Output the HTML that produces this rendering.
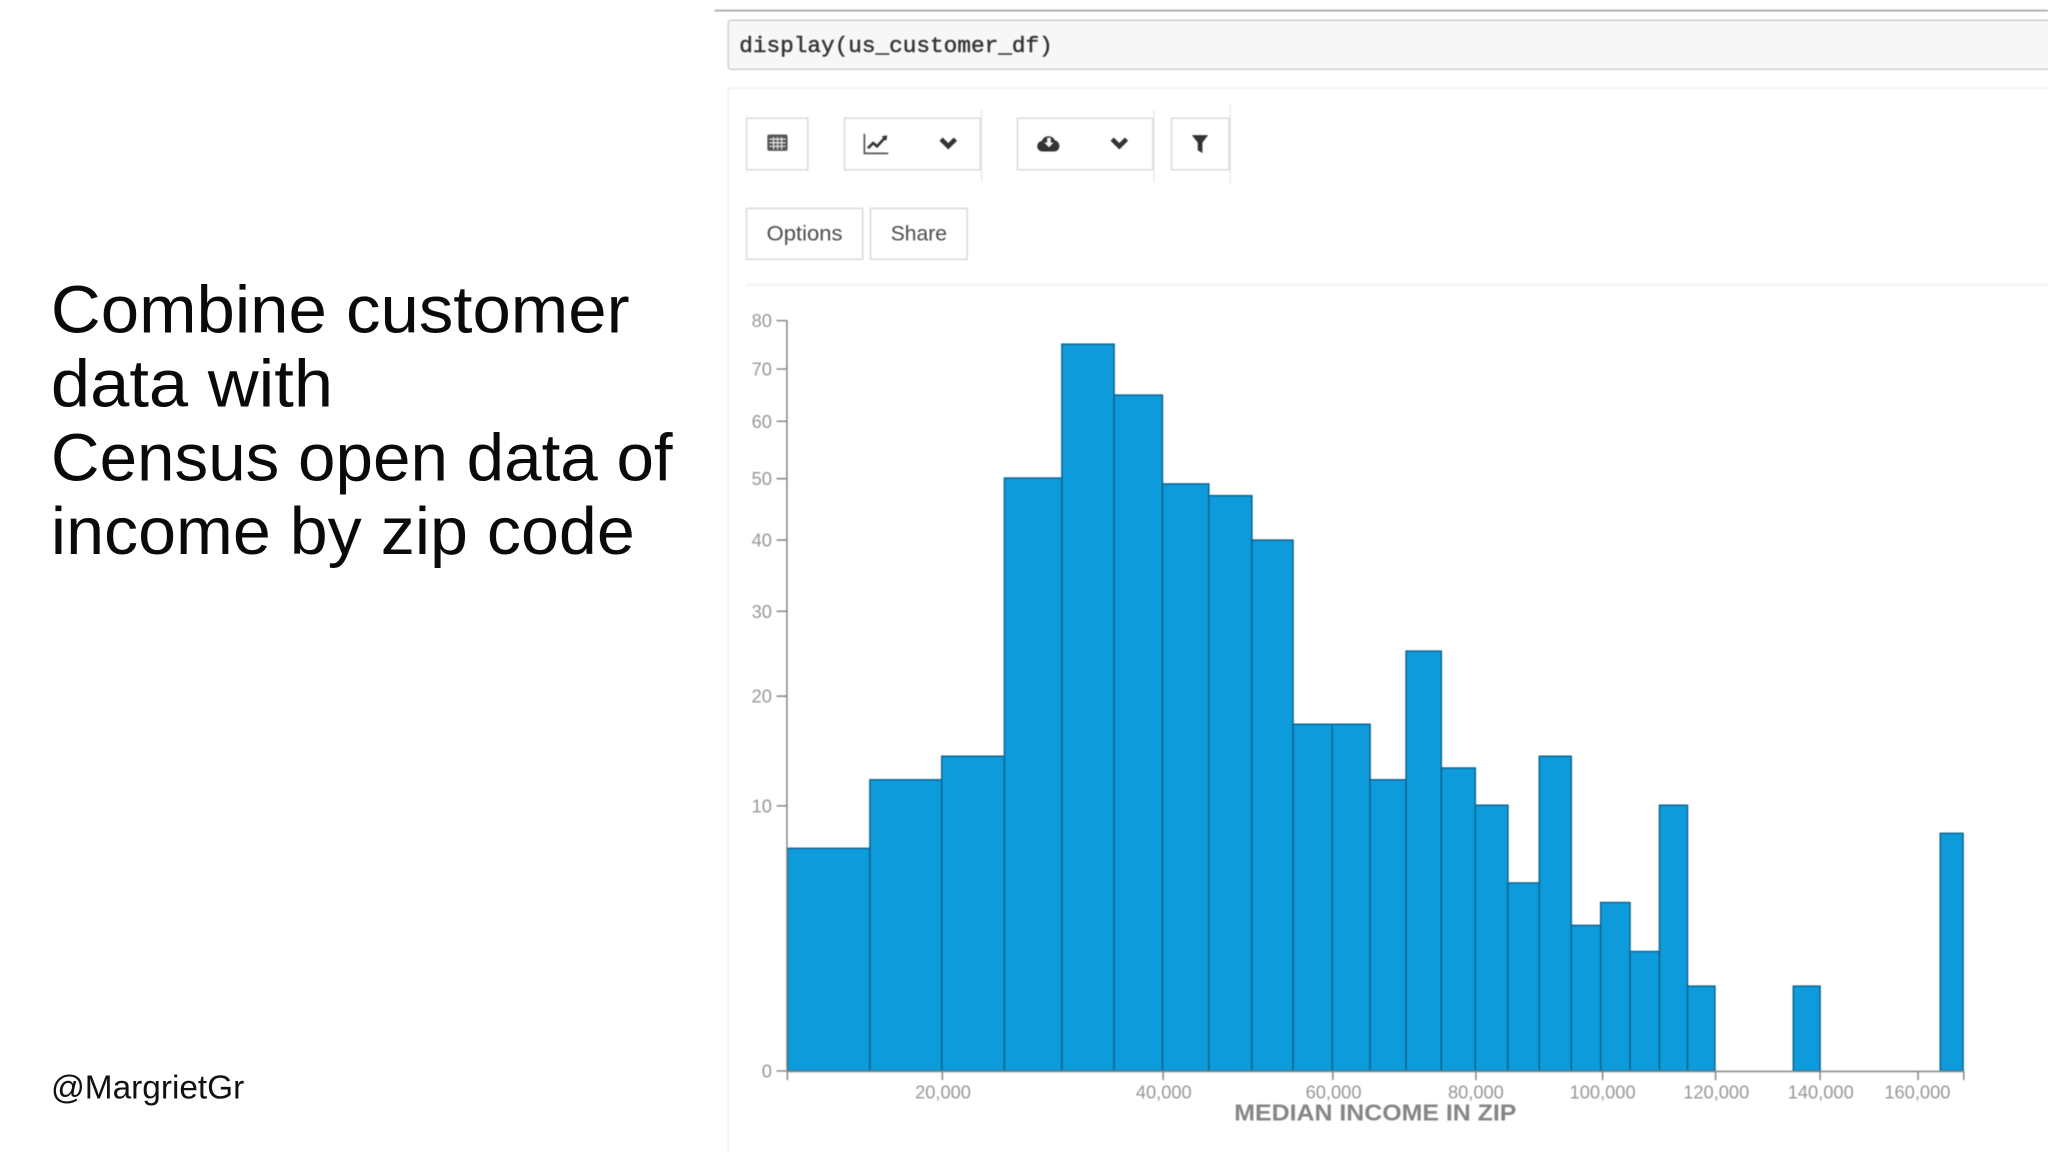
<!DOCTYPE html>
<html lang="en">
<head>
<meta charset="utf-8">
<title>Combine customer data with Census open data</title>
<style>
html,body{margin:0;padding:0;background:#fff;width:2048px;height:1152px;overflow:hidden}
svg{display:block;position:absolute;left:0;top:0}
.h{font-family:"Liberation Sans",sans-serif;font-size:51px;fill:#0a0a0a}
.ax{font-family:"Liberation Sans",sans-serif;font-size:14px;fill:#979797;text-anchor:middle}
.ay{font-family:"Liberation Sans",sans-serif;font-size:14px;fill:#979797;text-anchor:end}
.bar{fill:#0d9bdc;stroke:#0c628c;stroke-width:1.1}
.btn{fill:#fff;stroke:#d8d8d8;stroke-width:1.1}
</style>
</head>
<body>
<svg width="2048" height="1152" viewBox="0 0 1568 882" xmlns="http://www.w3.org/2000/svg">
<rect width="1568" height="882" fill="#fff"/>

<text class="h" x="39" y="254.7" textLength="443" lengthAdjust="spacingAndGlyphs">Combine customer</text>
<text class="h" x="39" y="311.3" textLength="216" lengthAdjust="spacingAndGlyphs">data with</text>
<text class="h" x="39" y="367.7" textLength="476" lengthAdjust="spacingAndGlyphs">Census open data of</text>
<text class="h" x="39" y="424.3" textLength="447" lengthAdjust="spacingAndGlyphs">income by zip code</text>
<text x="39" y="841" font-family="'Liberation Sans',sans-serif" font-size="25.500" fill="#111" textLength="148" lengthAdjust="spacingAndGlyphs">@MargrietGr</text>

<g style="filter:blur(.35px)">
<!-- notebook chrome -->
<rect x="547" y="7.4" width="1021" height="1.4" fill="#aaa"/>
<rect x="557.5" y="15.5" width="1020" height="37.5" rx="2" fill="#f7f7f7" stroke="#cfcfcf" stroke-width="1.1"/>
<text x="566" y="40" font-family="'Liberation Mono',monospace" font-size="17.2" fill="#333" stroke="#333" stroke-width=".35" textLength="240" lengthAdjust="spacingAndGlyphs">display(us_customer_df)</text>
<rect x="557.5" y="67.5" width="1020" height="830" rx="2" fill="#fff" stroke="#f0f0f0" stroke-width="1.2"/>

<!-- toolbar -->
<rect class="btn" x="571.5" y="90.5" width="47" height="39.5"/>
<rect class="btn" x="646.5" y="90.5" width="104" height="39.5"/>
<rect class="btn" x="779" y="90.5" width="103.5" height="39.5"/>
<rect class="btn" x="897" y="90.5" width="44" height="39.5"/>
<path d="M751.5 84V139M883.5 84V139M942 80V141" stroke="#e6e6e6" stroke-width="1" fill="none"/>

<!-- table icon -->
<rect x="587.5" y="103" width="15.5" height="12.5" rx="1.5" fill="#555"/>
<path d="M589 106.5h12.5M589 109.3h12.5M589 112h12.5M592.3 105v9.5M595.3 105v9.5M598.4 105v9.5" stroke="#e8e8e8" stroke-width=".9" fill="none"/>
<!-- chart icon -->
<path d="M661.8 102.5V117.4H680" stroke="#555" stroke-width="1.3" fill="none"/>
<path d="M664.5 113.5L668.5 109.5L671.5 112L677.5 105.5" stroke="#333" stroke-width="2" fill="none"/>
<path d="M675 104.3L679.3 103.6L678.6 108Z" fill="#333"/>
<!-- chevrons -->
<path d="M720.5 106.5L726 112L731.5 106.500" stroke="#333" stroke-width="3.500" fill="none"/>
<path d="M851.5 106.5L857 112L862.5 106.500" stroke="#333" stroke-width="3.500" fill="none"/>
<!-- cloud download -->
<path d="M798.500 116a4 4 0 0 1-4.300-4.800a3.600 3.600 0 0 1 3.400-3.200a5.400 5.400 0 0 1 10-.6a4.400 4.400 0 0 1 3.500 4.500a4 4 0 0 1-3.800 4.100Z" fill="#333"/>
<path d="M801.700 105.500h2.800v3.600h2.200l-3.600 3.700l-3.600-3.700h2.200Z" fill="#f4f4f4"/>
<!-- filter -->
<path d="M912.500 103.500H925L920.600 109.200V117.200L917 115V109.200Z" fill="#333"/>

<!-- option buttons -->
<rect class="btn" x="571.5" y="159.5" width="89" height="39"/>
<rect class="btn" x="666.5" y="159.5" width="74" height="39"/>
<text x="587" y="184" font-family="'Liberation Sans',sans-serif" font-size="16.500" fill="#4a4a4a" textLength="58" lengthAdjust="spacingAndGlyphs">Options</text>
<text x="682" y="184" font-family="'Liberation Sans',sans-serif" font-size="16.500" fill="#4a4a4a" textLength="43" lengthAdjust="spacingAndGlyphs">Share</text>
<rect x="571" y="217.6" width="997" height="1.1" fill="#eee"/>

<!-- bars -->
<rect class="bar" x="603" y="649.5" width="63" height="170.5"/>
<rect class="bar" x="666" y="597" width="55" height="223"/>
<rect class="bar" x="721" y="579" width="48" height="241"/>
<rect class="bar" x="769" y="366" width="44" height="454"/>
<rect class="bar" x="813" y="263.5" width="40" height="556.5"/>
<rect class="bar" x="853" y="302.5" width="37" height="517.5"/>
<rect class="bar" x="890" y="370.5" width="35.5" height="449.5"/>
<rect class="bar" x="925.5" y="379.5" width="33" height="440.5"/>
<rect class="bar" x="958.5" y="413.5" width="31.5" height="406.5"/>
<rect class="bar" x="990" y="554.5" width="30" height="265.5"/>
<rect class="bar" x="1020" y="554.5" width="29" height="265.5"/>
<rect class="bar" x="1049" y="597" width="27.5" height="223"/>
<rect class="bar" x="1076.5" y="498.5" width="27" height="321.5"/>
<rect class="bar" x="1103.5" y="588" width="26" height="232"/>
<rect class="bar" x="1129.5" y="616.5" width="25" height="203.5"/>
<rect class="bar" x="1154.5" y="676" width="24" height="144"/>
<rect class="bar" x="1178.5" y="579" width="24.5" height="241"/>
<rect class="bar" x="1203" y="708.5" width="22.5" height="111.5"/>
<rect class="bar" x="1225.5" y="691" width="22.5" height="129"/>
<rect class="bar" x="1248" y="728.5" width="22.5" height="91.5"/>
<rect class="bar" x="1270.5" y="616.5" width="21.5" height="203.5"/>
<rect class="bar" x="1292" y="755" width="21" height="65"/>
<rect class="bar" x="1373" y="755" width="20.5" height="65"/>
<rect class="bar" x="1485.5" y="638" width="17.5" height="182"/>

<!-- axes -->
<path d="M602.5 245V820M594.5 245.5H602.5M594.5 282.5H602.5M594.5 322.5H602.5M594.5 366.5H602.5M594.5 413.5H602.5M594.5 468H602.5M594.5 533H602.5M594.5 617H602.5M594.5 820H602.5" stroke="#8a8a8a" stroke-width="1.2" fill="none"/>
<path d="M602.5 820.3H1503.5M602.8 820V827M721.5 820V827M890.5 820V827M1020.5 820V827M1130 820V827M1227 820V827M1313.5 820V827M1393.5 820V827M1468.5 820V827M1503.5 820V827" stroke="#8a8a8a" stroke-width="1.2" fill="none"/>

<text class="ay" x="591" y="250.5">80</text>
<text class="ay" x="591" y="287.5">70</text>
<text class="ay" x="591" y="327.5">60</text>
<text class="ay" x="591" y="371.5">50</text>
<text class="ay" x="591" y="418.5">40</text>
<text class="ay" x="591" y="473">30</text>
<text class="ay" x="591" y="538">20</text>
<text class="ay" x="591" y="622">10</text>
<text class="ay" x="591" y="825">0</text>

<text class="ax" x="722" y="841">20,000</text>
<text class="ax" x="891" y="841">40,000</text>
<text class="ax" x="1021" y="841">60,000</text>
<text class="ax" x="1130" y="841">80,000</text>
<text class="ax" x="1227" y="841">100,000</text>
<text class="ax" x="1314" y="841">120,000</text>
<text class="ax" x="1394" y="841">140,000</text>
<text class="ax" x="1468" y="841">160,000</text>
<text x="945" y="858" font-family="'Liberation Sans',sans-serif" font-size="18" font-weight="700" fill="#858585" textLength="216" lengthAdjust="spacingAndGlyphs">MEDIAN INCOME IN ZIP</text>
</g>
</svg>
</body>
</html>
